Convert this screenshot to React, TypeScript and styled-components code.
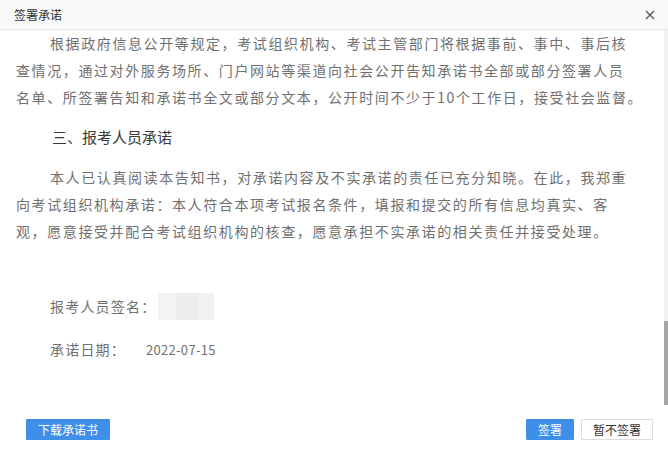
import React, { useLayoutEffect, useRef, useState } from 'react';
import styled, { createGlobalStyle } from 'styled-components';

const GlobalStyle = createGlobalStyle`
  html, body {
    margin: 0;
    padding: 0;
    height: 100%;
    background: #fff;
  }
  #root {
    height: 100%;
  }
  * {
    box-sizing: border-box;
  }
`;

const FONT = `"Noto Sans CJK SC", "Noto Sans", "Liberation Sans", sans-serif`;

const intro =
  '为深入推进“放管服”改革，优化考试报名服务，减少报考人员提交的证明材料，根据国家有关规定，在考试报名环节实行告知承诺制。现将有关事项告知如下，请报考人员认真阅读。';

const noticeItems = [
  '（一）报考条件。报考人员应当遵守中华人民共和国宪法和法律，遵守职业道德，具备相应的学历、专业和工作年限等条件，具体以本次考试报名公告及相关文件规定为准。',
  '（二）承诺方式。报考人员在网上报名时，应当如实填写个人信息，并对所填信息的真实性、准确性作出书面承诺。考试组织机构不再要求报考人员在报名环节提交学历证书、工作年限证明等材料。',
  '（三）核查方式。考试组织机构将通过数据共享、信息比对、现场核查等方式对报考人员的承诺内容进行核查，报考人员应当予以配合，并按要求提供相关证明材料。',
  '（四）失信责任。报考人员隐瞒有关情况或者提供虚假承诺的，考试组织机构将依据有关规定作出考试成绩无效、取消相应资格等处理，并将有关情况记入考试诚信档案库。',
  '（五）资格审核。考试结束后，考试组织机构将对合格人员的报考条件进行审核，审核不通过的，不予发放相应证书；已发放证书的，予以收回并注销。',
  '（六）学历认定。报考人员的学历以国家承认的学历为准，国外学历需经教育部留学服务中心认证，认证材料由报考人员在资格审核时提供。',
  '（七）工作年限。工作年限是指取得规定学历前后从事相关专业工作时间的总和，计算截止日期为本年度年底，报考人员应当如实填报。',
  '（八）信息变更。报考人员在报名期间个人信息发生变化的，应当及时在报名系统中进行修改，因信息填报错误造成的后果由报考人员自行承担。',
  '（九）考试纪律。报考人员应当严格遵守考试纪律和考场规则，对违反考试纪律的行为，考试组织机构将依照有关规定严肃处理。',
  '（十）其他事项。报考人员对告知内容有疑问的，可在报名前向当地考试组织机构咨询，报考人员一经提交承诺即视为已知晓并同意上述告知内容。',
];

const supervisionItems = [
  '（一）考试组织机构将建立健全告知承诺事中事后监管制度，对报考人员的承诺情况开展抽查核验，对发现的失信行为依法依规予以处理。',
  '（二）对通过告知承诺方式报考的人员，考试组织机构可在考试前、考试后或证书发放前，采取全面核查或者随机抽查的方式进行核验。',
  '（三）报考人员的失信情况将按照有关规定纳入信用记录，并依法依规推送至全国信用信息共享平台，实施相应的失信惩戒措施。',
  '（四）报考人员对核查结果有异议的，可自收到核查结果之日起十个工作日内向考试组织机构提出复核申请，并提供相关证明材料。',
  '（五）考试组织机构应当妥善保管报考人员的个人信息和承诺材料，不得泄露或者用于与考试无关的用途，依法保护报考人员的合法权益。',
];

const para1 = [
  '根据政府信息公开等规定，考试组织机构、考试主管部门将根据事前、事中、事后核',
  '查情况，通过对外服务场所、门户网站等渠道向社会公开告知承诺书全部或部分签署人员',
  '名单、所签署告知和承诺书全文或部分文本，公开时间不少于10个工作日，接受社会监督。',
];

const para2 = [
  '本人已认真阅读本告知书，对承诺内容及不实承诺的责任已充分知晓。在此，我郑重',
  '向考试组织机构承诺：本人符合本项考试报名条件，填报和提交的所有信息均真实、客',
  '观，愿意接受并配合考试组织机构的核查，愿意承担不实承诺的相关责任并接受处理。',
];

const CloseIcon = () => (
  <svg width="10" height="10" viewBox="0 0 10 10" fill="none">
    <path d="M1 1L9 9M9 1L1 9" stroke="#555" strokeWidth="1.3" />
  </svg>
);

const App: React.FC = () => {
  const bodyRef = useRef<HTMLDivElement>(null);
  const [thumb, setThumb] = useState({ top: 0, height: 0 });

  useLayoutEffect(() => {
    const el = bodyRef.current;
    if (!el) return;
    el.scrollTop = el.scrollHeight;
    const track = el.clientHeight;
    setThumb({
      top: (el.scrollTop / el.scrollHeight) * track,
      height: (el.clientHeight / el.scrollHeight) * track,
    });
  }, []);

  return (
    <>
      <GlobalStyle />
      <Dialog>
        <Header>
          <Title>签署承诺</Title>
          <CloseButton aria-label="关闭">
            <CloseIcon />
          </CloseButton>
        </Header>

        <Main>
          <Body ref={bodyRef}>
            <DocTitle>考试报名告知承诺书</DocTitle>
            <Section>
              <Paragraph>{intro}</Paragraph>
            </Section>
            <Heading>一、告知内容</Heading>
            <Section>
              {noticeItems.map((t) => (
                <Paragraph key={t}>{t}</Paragraph>
              ))}
            </Section>
            <Heading>二、监督管理</Heading>
            <Section>
              {supervisionItems.map((t) => (
                <Paragraph key={t}>{t}</Paragraph>
              ))}
              <Paragraph>
                {para1.map((line, i) => (
                  <Line key={line} $indent={i === 0}>
                    {line}
                  </Line>
                ))}
              </Paragraph>
            </Section>

            <Heading>三、报考人员承诺</Heading>
            <Paragraph>
              {para2.map((line, i) => (
                <Line key={line} $indent={i === 0}>
                  {line}
                </Line>
              ))}
            </Paragraph>

            <FieldRow $gap={48}>
              <FieldLabel $width={108}>报考人员签名：</FieldLabel>
              <SignBlur />
            </FieldRow>
            <FieldRow $gap={16}>
              <FieldLabel $width={96}>承诺日期：</FieldLabel>
              <DateValue>2022-07-15</DateValue>
            </FieldRow>
          </Body>
          <ScrollTrack>
            <ScrollThumb style={{ marginTop: thumb.top, height: thumb.height }} />
          </ScrollTrack>
        </Main>

        <Footer>
          <Button $primary>下载承诺书</Button>
          <Actions>
            <Button $primary>签署</Button>
            <Button>暂不签署</Button>
          </Actions>
        </Footer>
      </Dialog>
    </>
  );
};

const Dialog = styled.div`
  height: 100vh;
  display: flex;
  flex-direction: column;
  background: #fff;
  font-family: ${FONT};
`;

const Header = styled.div`
  height: 30px;
  flex: none;
  display: flex;
  align-items: center;
  justify-content: space-between;
  padding: 0 13px 0 14px;
  background: #f8f8f8;
  border-bottom: 1px solid #e8e8e8;
`;

const Title = styled.div`
  font-size: 12px;
  color: #333;
`;

const CloseButton = styled.button`
  border: none;
  background: none;
  padding: 0;
  display: flex;
  cursor: pointer;
`;

const Main = styled.div`
  flex: 1;
  min-height: 0;
  display: flex;
`;

const Body = styled.div`
  flex: 1;
  min-width: 0;
  display: flex;
  flex-direction: column;
  overflow-y: auto;
  scrollbar-width: none;
  padding: 0 14px 42px 16px;
  color: #707070;
  font-size: 14px;
  line-height: 27px;

  &::-webkit-scrollbar {
    display: none;
  }
`;

const ScrollTrack = styled.div`
  width: 4px;
  flex: none;
  background: #f1f1f1;
`;

const ScrollThumb = styled.div`
  background: #a6a6a6;
`;

const DocTitle = styled.h1`
  margin: 20px 0 30px;
  text-align: center;
  font-size: 18px;
  font-weight: 500;
  color: #333;
`;

const Section = styled.div`
  display: flex;
  flex-direction: column;
  gap: 14px;
`;

const Paragraph = styled.div`
  flex: none;
  letter-spacing: 1.6px;
  text-indent: 34px;
`;

const Line = styled.span<{ $indent?: boolean }>`
  display: block;
  height: 27px;
  white-space: nowrap;
  text-indent: 0;
  padding-left: ${(p) => (p.$indent ? '34px' : '0')};
`;

const Heading = styled.div`
  flex: none;
  height: 27px;
  margin: 12px 0 14px 36px;
  font-size: 15px;
  color: #3a3a3a;
`;

const FieldRow = styled.div<{ $gap: number }>`
  flex: none;
  height: 27px;
  margin: ${(p) => p.$gap}px 0 0 34px;
  display: flex;
  align-items: center;
`;

const FieldLabel = styled.span<{ $width: number }>`
  flex: none;
  width: ${(p) => p.$width}px;
  white-space: nowrap;
  letter-spacing: 1.2px;
`;

const SignBlur = styled.span`
  flex: none;
  width: 56px;
  height: 27px;
  background: linear-gradient(90deg, #f2f3f3 0 18px, #ebeced 18px 40px, #f1f2f2 40px);
`;

const DateValue = styled.span`
  font-size: 13px;
  letter-spacing: 0.3px;
`;

const Footer = styled.div`
  height: 44px;
  flex: none;
  display: flex;
  justify-content: space-between;
  align-items: flex-start;
  padding: 14px 15px 0 26px;
`;

const Actions = styled.div`
  display: flex;
  gap: 7px;
`;

const Button = styled.button<{ $primary?: boolean }>`
  height: 21px;
  padding: 0 11px;
  font-family: ${FONT};
  font-size: 12px;
  line-height: 19px;
  border: 1px solid ${(p) => (p.$primary ? '#3d8fe8' : '#dcdcdc')};
  background: ${(p) => (p.$primary ? '#3d8fe8' : '#fff')};
  color: ${(p) => (p.$primary ? '#fff' : '#333')};
  border-radius: 1px;
  cursor: pointer;
`;

export default App;
